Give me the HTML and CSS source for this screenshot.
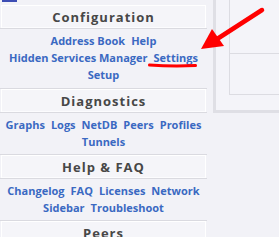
FILE: index.html
```html
<!DOCTYPE html>
<html>
<head>
<meta charset="utf-8">
<link rel="stylesheet" href="styles.css">
</head>
<body>
<div class="page">
  <div class="sidebar">
    <div class="topbar"><span class="logo"></span></div>
    <div class="section first">
      <h3 class="title">Configuration</h3>
      <div class="links">
        <a>Address Book</a><a>Help</a><a>Hidden Services Manager</a><a>Settings</a><a>Setup</a>
      </div>
    </div>
    <div class="section">
      <h3 class="title">Diagnostics</h3>
      <div class="links">
        <a>Graphs</a><a>Logs</a><a>NetDB</a><a>Peers</a><a>Profiles</a><a>Tunnels</a>
      </div>
    </div>
    <div class="section">
      <h3 class="title">Help &amp; FAQ</h3>
      <div class="links">
        <a>Changelog</a><a>FAQ</a><a>Licenses</a><a>Network</a><a>Sidebar</a><a>Troubleshoot</a>
      </div>
    </div>
    <div class="section">
      <h3 class="title">Peers</h3>
    </div>
  </div>
  <div class="main">
    <div class="panel">
      <div class="inner">
        <div class="inner-top"></div>
      </div>
    </div>
  </div>
</div>
<svg class="annot" width="279" height="237" viewBox="0 0 279 237">
  <line x1="262" y1="10" x2="214" y2="41" stroke="#f00" stroke-width="4.5" stroke-linecap="round"/>
  <polygon points="201,49 212,29 224,46" fill="#f00"/>
  <path d="M149.5 65 Q172 66.5 195.5 65.5" stroke="#f00" stroke-width="3" fill="none" stroke-linecap="round"/>
</svg>
</body>
</html>
```
FILE: styles.css
```css
html, body {
  margin: 0;
  padding: 0;
}
body {
  background: #f2f2f7;
  font-family: "DejaVu Sans", sans-serif;
  width: 279px;
  height: 237px;
  overflow: hidden;
  position: relative;
}
.page {
  display: flex;
  align-items: flex-start;
}
.sidebar {
  width: 207px;
  flex: none;
}
.topbar {
  height: 4px;
  position: relative;
}
.logo {
  display: block;
  width: 15px;
  height: 2px;
  margin-left: 2px;
  background: #3d4db4;
}
.section {
  border-bottom: 1px solid #dadae0;
}
.section:not(.first) .title {
  margin-top: 0;
}
.title {
  margin: 0 1px 0 1px;
  height: 21px;
  line-height: 22px;
  border: 1px solid #ffffff;
  background: #f5f5f9;
  text-align: center;
  font-family: "Open Sans", sans-serif;
  font-size: 13px;
  font-weight: 700;
  letter-spacing: 1px;
  color: #474747;
  border-bottom-color: #fcfcfe;
}
.first .title {
  margin-top: 1px;
}
.links {
  border-top: 1px solid #dadae0;
  padding: 3px 1px 4px;
  display: flex;
  flex-wrap: wrap;
  justify-content: center;
  column-gap: 6px;
  line-height: 17px;
}
.first .links {
  padding-bottom: 5px;
}
.links a {
  font-family: "Open Sans", sans-serif;
  font-size: 11px;
  font-weight: 700;
  color: #3a69c2;
  white-space: nowrap;
  text-decoration: none;
}
.main {
  flex: 1;
  margin-left: 6px;
}
.panel {
  height: 110px;
  border-left: 3px solid #dfdfe5;
  border-bottom: 3px solid #dfdfe5;
  background: #f4f4f9;
  padding-left: 13px;
}
.inner {
  height: 94px;
  border-left: 1px solid #dcdce2;
  border-bottom: 1px solid #dcdce2;
}
.inner-top {
  height: 53px;
  border-bottom: 1px solid #dcdce2;
}
.annot {
  position: absolute;
  left: 0;
  top: 0;
}
```
